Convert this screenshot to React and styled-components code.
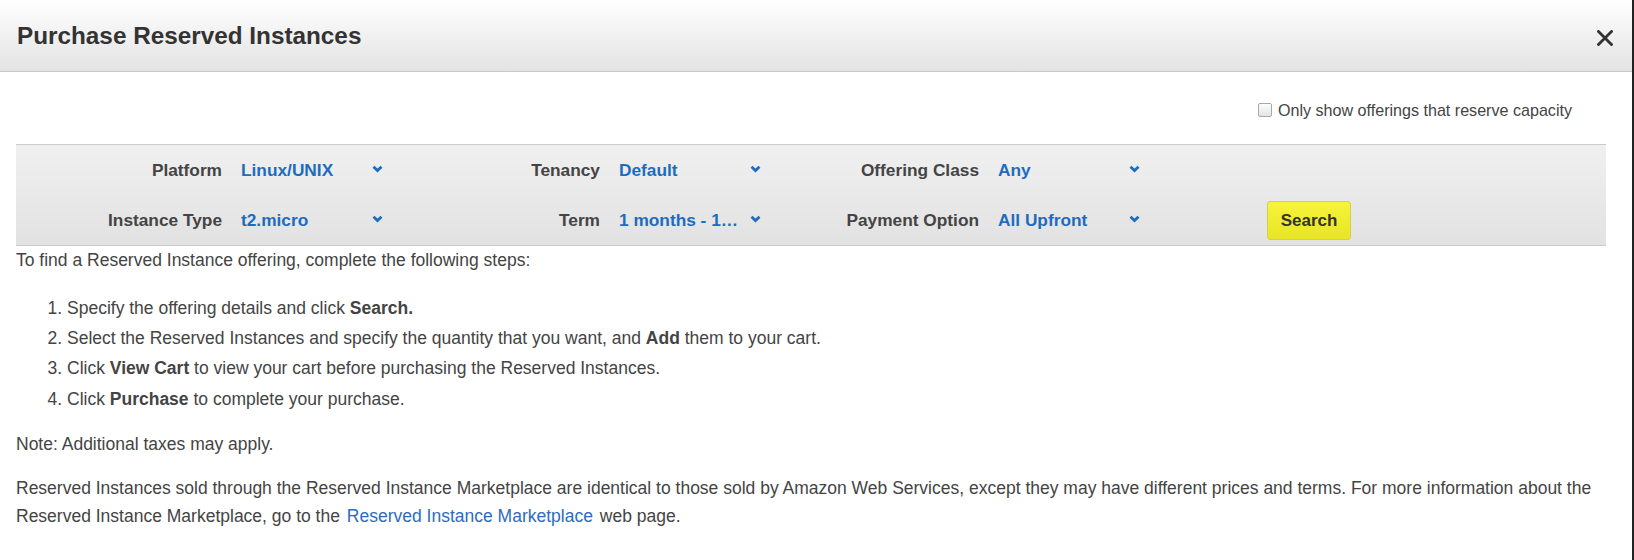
import styled, { createGlobalStyle } from 'styled-components';

const GlobalStyle = createGlobalStyle`
  html, body {
    margin: 0;
    padding: 0;
    background: #fff;
  }
  body {
    font-family: "Liberation Sans", Arial, sans-serif;
    color: #444;
  }
`;

const Modal = styled.div`
  width: 1632px;
  min-height: 560px;
  border-right: 2px solid #222;
`;

const Header = styled.div`
  height: 71px;
  border-bottom: 1px solid #c9c9c9;
  background: linear-gradient(#ffffff, #e3e3e3);
  display: flex;
  align-items: center;
  justify-content: space-between;
  padding: 0 19px 0 17px;
`;

const Title = styled.h2`
  margin: 0;
  font-size: 24.3px;
  font-weight: bold;
  color: #333;
`;

const CloseButton = styled.button`
  border: 0;
  background: none;
  padding: 0;
  margin-top: 5px;
  width: 16px;
  height: 16px;
  display: flex;
  cursor: pointer;
`;

const Body = styled.div`
  padding: 0 26px 0 16px;
`;

const OptionRow = styled.label`
  display: flex;
  justify-content: flex-end;
  align-items: center;
  gap: 6px;
  height: 20px;
  margin-top: 28px;
  padding-right: 34px;
  font-size: 16.1px;
  color: #444;
`;

const Check = styled.span`
  width: 12px;
  height: 12px;
  border: 1px solid #a8a8a8;
  border-radius: 2px;
  background: linear-gradient(#fdfdfd, #e4e4e4);
`;

const FilterBar = styled.div`
  margin-top: 24px;
  border-top: 1px solid #cbcbcb;
  border-bottom: 1px solid #cbcbcb;
  background: linear-gradient(#f0f0f0, #e2e2e2);
  display: grid;
  grid-template-columns: 206px 142px 198px 142px 199px 142px auto;
  grid-auto-rows: 50px;
  column-gap: 19px;
  align-items: center;
`;

const Label = styled.span`
  text-align: right;
  font-weight: bold;
  font-size: 17.3px;
  color: #444;
  white-space: nowrap;
`;

const Select = styled.div`
  display: flex;
  align-items: center;
  min-width: 0;
  cursor: pointer;
`;

const Value = styled.span`
  flex: 1;
  min-width: 0;
  overflow: hidden;
  white-space: nowrap;
  text-overflow: ellipsis;
  font-weight: bold;
  font-size: 17.3px;
  color: #1d6cbf;
`;

const Chevron = styled.svg`
  flex: none;
  margin-left: 10px;
  margin-top: -3px;
`;

const SearchButton = styled.button`
  grid-column: 7;
  grid-row: 2;
  justify-self: start;
  margin-left: 108px;
  width: 84px;
  height: 39px;
  border: 1px solid #d3cf55;
  border-radius: 3px;
  background: linear-gradient(#f6f43c, #e8e524);
  font-family: inherit;
  font-weight: bold;
  font-size: 17px;
  color: #333;
  padding-top: 2px;
  cursor: pointer;
`;

const Text = styled.p`
  margin: 0;
  font-size: 17.5px;
  line-height: 28px;
  color: #444;
`;

const Steps = styled.ol`
  margin: 19px 0 16px;
  padding-left: 51px;
  font-size: 17.5px;
  line-height: 30.2px;
  color: #444;
`;

const Link = styled.a`
  color: #2c6cc4;
  text-decoration: none;
  margin: 0 2px;
`;

const CloseIcon = () => (
  <svg width="16" height="16" viewBox="0 0 16 16">
    <path d="M1.5 1.5 L14.5 14.5 M14.5 1.5 L1.5 14.5" stroke="#333" strokeWidth="2.8" strokeLinecap="square" />
  </svg>
);

const FilterField = ({ label, value, row, col }) => (
  <>
    <Label style={{ gridRow: row, gridColumn: col }}>{label}</Label>
    <Select style={{ gridRow: row, gridColumn: col + 1 }}>
      <Value>{value}</Value>
      <Chevron width="11" height="8" viewBox="0 0 11 8">
        <polyline points="1.5,1.8 5.5,5.6 9.5,1.8" fill="none" stroke="#1d6cbf" strokeWidth="2.8" />
      </Chevron>
    </Select>
  </>
);

const fields = [
  { label: 'Platform', value: 'Linux/UNIX', row: 1, col: 1 },
  { label: 'Tenancy', value: 'Default', row: 1, col: 3 },
  { label: 'Offering Class', value: 'Any', row: 1, col: 5 },
  { label: 'Instance Type', value: 't2.micro', row: 2, col: 1 },
  { label: 'Term', value: '1 months - 1 months', row: 2, col: 3 },
  { label: 'Payment Option', value: 'All Upfront', row: 2, col: 5 },
];

export default function App() {
  return (
    <>
      <GlobalStyle />
      <Modal>
        <Header>
          <Title>Purchase Reserved Instances</Title>
          <CloseButton aria-label="Close">
            <CloseIcon />
          </CloseButton>
        </Header>
        <Body>
          <OptionRow>
            <Check />
            Only show offerings that reserve capacity
          </OptionRow>
          <FilterBar>
            {fields.map((f) => (
              <FilterField key={f.label} {...f} />
            ))}
            <SearchButton>Search</SearchButton>
          </FilterBar>
          <Text>To find a Reserved Instance offering, complete the following steps:</Text>
          <Steps>
            <li>Specify the offering details and click <b>Search.</b></li>
            <li>Select the Reserved Instances and specify the quantity that you want, and <b>Add</b> them to your cart.</li>
            <li>Click <b>View Cart</b> to view your cart before purchasing the Reserved Instances.</li>
            <li>Click <b>Purchase</b> to complete your purchase.</li>
          </Steps>
          <Text>Note: Additional taxes may apply.</Text>
          <Text style={{ marginTop: 16 }}>
            Reserved Instances sold through the Reserved Instance Marketplace are identical to those sold by Amazon Web Services, except they may have different prices and terms. For more information about the Reserved Instance Marketplace, go to the{' '}
            <Link href="#">Reserved Instance Marketplace</Link>{' '}
            web page.
          </Text>
        </Body>
      </Modal>
    </>
  );
}
